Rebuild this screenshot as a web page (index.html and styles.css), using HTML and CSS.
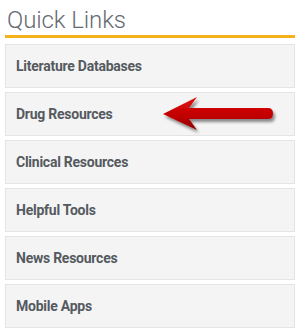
FILE: index.html
```html
<!DOCTYPE html>
<html>
<head>
<meta charset="utf-8">
<link rel="stylesheet" href="styles.css">
</head>
<body>
<div class="panel">
  <h2 class="title">Quick Links</h2>
  <ul class="links">
    <li class="link">Literature Databases</li>
    <li class="link">Drug Resources
      <svg class="arrow" width="118" height="40" viewBox="0 0 118 40">
        <defs>
          <linearGradient id="g" x1="0" y1="0" x2="0" y2="1">
            <stop offset="0" stop-color="#e01010"/>
            <stop offset="0.6" stop-color="#c00000"/>
            <stop offset="1" stop-color="#8a0000"/>
          </linearGradient>
          <filter id="s" x="-10%" y="-30%" width="130%" height="170%">
            <feGaussianBlur in="SourceAlpha" stdDeviation="1.6"/>
            <feOffset dx="2" dy="3"/>
            <feComponentTransfer><feFuncA type="linear" slope="0.45"/></feComponentTransfer>
            <feMerge><feMergeNode/><feMergeNode in="SourceGraphic"/></feMerge>
          </filter>
        </defs>
        <path filter="url(#s)" fill="url(#g)" d="M2 19 L36 2 L28 13 L107 13 Q112 13 112 18.5 Q112 24 107 24 L28 24 L36 35 Z"/>
      </svg>
    </li>
    <li class="link">Clinical Resources</li>
    <li class="link">Helpful Tools</li>
    <li class="link">News Resources</li>
    <li class="link">Mobile Apps</li>
  </ul>
</div>
</body>
</html>
```
FILE: styles.css
```css
html, body {
  margin: 0;
  padding: 0;
  background: #ffffff;
}
.panel {
  padding: 6px 5px 0 5px;
  width: 290px;
  font-family: Roboto, "Liberation Sans", sans-serif;
}
.title {
  margin: 0;
  padding: 0 0 0 2px;
  font-weight: 300;
  font-size: 24px;
  line-height: 29px;
  color: #666a72;
  letter-spacing: -0.1px;
  border-bottom: 3px solid #f5b21a;
}
.links {
  list-style: none;
  margin: 6px 0 0 0;
  padding: 0;
  display: flex;
  flex-direction: column;
  gap: 4px;
}
.link {
  position: relative;
  height: 42px;
  display: flex;
  align-items: center;
  padding-left: 10px;
  background: #f4f4f4;
  border: 1px solid #e4e4e4;
  font-weight: 700;
  font-size: 14px;
  letter-spacing: -0.25px;
  color: #555a60;
}
.arrow {
  position: absolute;
  left: 155px;
  top: 2px;
}
```
